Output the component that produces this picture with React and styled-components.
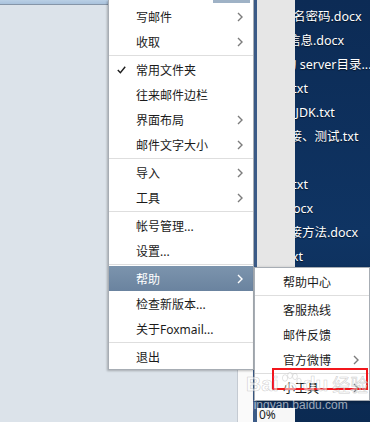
import React from "react";
import styled, { createGlobalStyle } from "styled-components";

const GlobalStyle = createGlobalStyle`
  html, body {
    margin: 0;
    padding: 0;
    background: #dce3ea;
  }
  body {
    font-family: "Noto Sans", "Noto Sans CJK SC", sans-serif;
  }
`;

const desktopFiles = [
  { name: "用户名密码.docx", shift: -27 },
  { name: "个人信息.docx", shift: -32 },
  { name: "的 server目录...", shift: -11 },
  { name: "说明.txt", shift: -31 },
  { name: "安装到JDK.txt", shift: -37 },
  { name: "连接、测试.txt", shift: -18 },
  { name: "", shift: 0 },
  { name: "文档.txt", shift: -31 },
  { name: "说明.docx", shift: -38 },
  { name: "连接方法.docx", shift: -18 },
  { name: "说明.txt", shift: -36 },
];

const mainMenu = [
  { label: "写邮件", arrow: true },
  { label: "收取", arrow: true },
  "sep",
  { label: "常用文件夹", check: true },
  { label: "往来邮件边栏" },
  { label: "界面布局", arrow: true },
  { label: "邮件文字大小", arrow: true },
  "sep",
  { label: "导入", arrow: true },
  { label: "工具", arrow: true },
  "sep",
  { label: "帐号管理..." },
  { label: "设置..." },
  "sep",
  { label: "帮助", arrow: true, active: true },
  { label: "检查新版本..." },
  { label: "关于Foxmail..." },
  "sep",
  { label: "退出" },
];

const helpMenu = [
  { label: "帮助中心" },
  "sep",
  { label: "客服热线" },
  { label: "邮件反馈" },
  { label: "官方微博", arrow: true },
  "sep",
  { label: "小工具", arrow: true },
];

function Check() {
  return (
    <CheckMark width="9" height="8" viewBox="0 0 9 8">
      <polyline points="0.8,4 3.4,6.8 8.2,0.8" fill="none" stroke="#1e1e1e" strokeWidth="1.4" />
    </CheckMark>
  );
}

function Chevron({ light }) {
  return (
    <Arrow width="6" height="10" viewBox="0 0 6 10">
      <polyline
        points="1,1 5,5 1,9"
        fill="none"
        stroke={light ? "#ffffff" : "#7c7c7c"}
        strokeWidth="1.4"
      />
    </Arrow>
  );
}

function MenuList({ items, indent }) {
  return items.map((item, i) =>
    item === "sep" ? (
      <Separator key={i} />
    ) : (
      <Item key={i} $active={item.active} $indent={indent}>
        <Mark>{item.check && <Check />}</Mark>
        <Label>{item.label}</Label>
        {item.arrow && <Chevron light={item.active} />}
      </Item>
    )
  );
}

export default function App() {
  return (
    <>
      <GlobalStyle />
      <Screen>
        <AppWindow>
          <TopBar />
          <AppBody>
            <LeftPane />
            <ListPane />
          </AppBody>
        </AppWindow>
        <WindowEdge />
        <SideStrip>
          <GreyPanel />
          <StripGap />
          <Progress>0%</Progress>
        </SideStrip>
        <Desktop>
          {desktopFiles.map((f, i) => (
            <FileName key={i} $shift={f.shift}>
              {f.name || "\u00a0"}
            </FileName>
          ))}
        </Desktop>

        <MainMenu>
          <AnchorRow>
            <Anchor />
          </AnchorRow>
          <MenuList items={mainMenu} indent={27} />
        </MainMenu>

        <SubMenu>
          <MenuList items={helpMenu} indent={28} />
        </SubMenu>

        <RedBox />

        <Watermark>
          <span>Bai</span>
          <Paw width="22" height="20" viewBox="0 0 22 20">
            <ellipse cx="5" cy="6" rx="2.6" ry="3.3" />
            <ellipse cx="10" cy="3.5" rx="2.4" ry="3.1" />
            <ellipse cx="15" cy="4.5" rx="2.4" ry="3.1" />
            <ellipse cx="19" cy="9" rx="2.2" ry="2.8" />
            <path d="M5 16 C6 10 14 9 16 15 C17 19 11 18 10 18 C8 18 4 19 5 16 Z" />
          </Paw>
          <span>du</span>
          <WatermarkCn>经验</WatermarkCn>
        </Watermark>
        <SiteMark>jingyan.baidu.com</SiteMark>
      </Screen>
    </>
  );
}

const Screen = styled.div`
  position: relative;
  display: flex;
  width: 370px;
  height: 422px;
  overflow: hidden;
`;

const AppWindow = styled.div`
  display: flex;
  flex-direction: column;
  width: 253px;
`;

const TopBar = styled.div`
  height: 4px;
  background: linear-gradient(180deg, #b9cfe5, #a9c2dc);
  border-bottom: 1px solid #8595a8;
`;

const AppBody = styled.div`
  flex: 1;
  display: flex;
`;

const LeftPane = styled.div`
  flex: 1;
  background: #dce3ea;
`;

const ListPane = styled.div`
  width: 15px;
  background: #fafafa;
  border-left: 1px solid #c4cad2;
`;

const WindowEdge = styled.div`
  width: 4px;
  background: #3b5b87;
`;

const SideStrip = styled.div`
  width: 38px;
  display: flex;
  flex-direction: column;
`;

const GreyPanel = styled.div`
  flex: 1;
  background: #e6e6e6;
`;

const StripGap = styled.div`
  height: 8px;
  background: #0d2d57;
`;

const Progress = styled.div`
  height: 14px;
  background: #f7f7f7;
  font-size: 12px;
  line-height: 14px;
  color: #222;
  padding-left: 2px;
`;

const Desktop = styled.div`
  flex: 1;
  overflow: hidden;
  padding-top: 5px;
  background: linear-gradient(180deg, #0c2b55 0%, #0f3463 55%, #0b2a52 100%);
`;

const FileName = styled.div`
  height: 24px;
  line-height: 24px;
  margin-left: ${(p) => p.$shift}px;
  white-space: nowrap;
  font-size: 12.5px;
  color: #ffffff;
  text-shadow: 0 1px 1px rgba(0, 0, 0, 0.6);
`;

const MainMenu = styled.div`
  position: absolute;
  left: 108px;
  top: 0;
  width: 144px;
  background: #ffffff;
  border: 1px solid #a7adb4;
  border-top: none;
  box-shadow: -1px 1px 2px rgba(0, 0, 0, 0.25);
`;

const AnchorRow = styled.div`
  display: flex;
  justify-content: flex-end;
  height: 4px;
`;

const Anchor = styled.div`
  width: 37px;
  height: 3px;
  margin-right: 3px;
  background: #9fb2c6;
`;

const SubMenu = styled.div`
  position: absolute;
  left: 254px;
  top: 267px;
  width: 114px;
  padding-top: 1px;
  background: #ffffff;
  border: 1px solid #a7adb4;
  box-shadow: 1px 1px 3px rgba(0, 0, 0, 0.3);
`;

const Item = styled.div`
  display: flex;
  align-items: center;
  height: 25px;
  padding-right: 10px;
  font-family: "Noto Sans", "Noto Sans CJK SC", sans-serif;
  font-size: 12px;
  color: ${(p) => (p.$active ? "#ffffff" : "#1b1b1b")};
  background: ${(p) =>
    p.$active ? "linear-gradient(180deg, #7c94ad 0%, #6a839f 100%)" : "transparent"};
  & > span:first-child {
    width: ${(p) => p.$indent}px;
  }
`;

const Mark = styled.span`
  display: flex;
  justify-content: flex-end;
  padding-right: 10px;
  box-sizing: border-box;
  flex-shrink: 0;
`;

const CheckMark = styled.svg`
  display: block;
`;

const Label = styled.span`
  flex: 1;
  white-space: nowrap;
`;

const Arrow = styled.svg`
  display: block;
  flex-shrink: 0;
`;

const Separator = styled.div`
  height: 1px;
  margin: 1px 0;
  background: #dedede;
`;

const RedBox = styled.div`
  position: absolute;
  left: 272px;
  top: 368px;
  width: 92px;
  height: 18px;
  border: 2px solid #f2161c;
`;

const Watermark = styled.div`
  position: absolute;
  left: 246px;
  top: 372px;
  display: flex;
  align-items: flex-end;
  font-family: "Liberation Sans", sans-serif;
  font-size: 21px;
  font-weight: bold;
  line-height: 22px;
  color: rgba(255, 255, 255, 0.55);
  -webkit-text-stroke: 0.6px rgba(150, 150, 150, 0.45);
  pointer-events: none;
`;

const Paw = styled.svg`
  margin: 0 1px 3px;
  fill: rgba(255, 255, 255, 0.5);
  stroke: rgba(150, 150, 150, 0.45);
  stroke-width: 0.6;
`;

const WatermarkCn = styled.span`
  margin-left: 4px;
  font-family: "Noto Sans CJK SC", sans-serif;
  font-size: 18px;
  font-weight: normal;
`;

const SiteMark = styled.div`
  position: absolute;
  left: 251px;
  top: 398px;
  font-family: "Liberation Sans", sans-serif;
  font-size: 12px;
  line-height: 14px;
  color: rgba(255, 255, 255, 0.6);
  pointer-events: none;
`;
